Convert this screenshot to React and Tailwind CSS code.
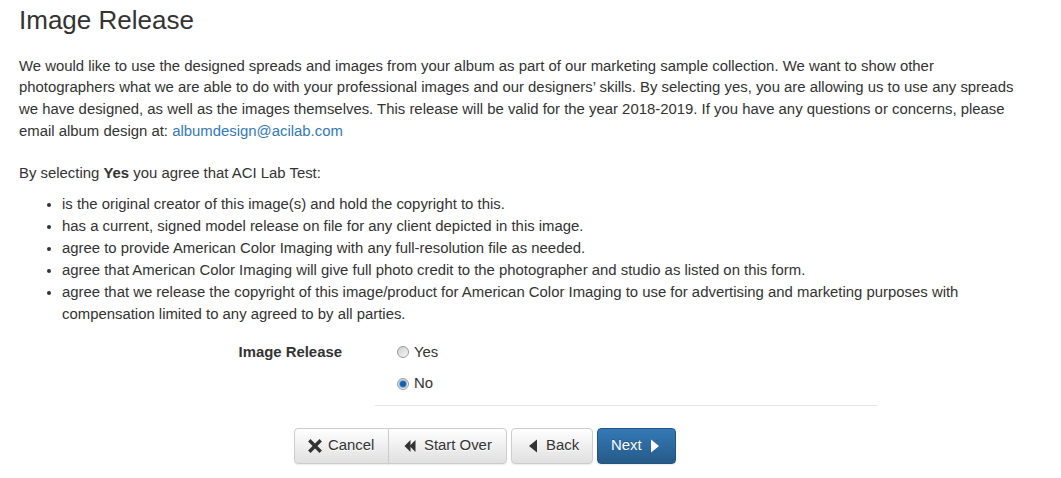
const font = { fontFamily: '"Liberation Sans", Arial, Helvetica, sans-serif' };

const XIcon = () => (
  <svg width="14" height="14" viewBox="0 0 14 14" className="shrink-0">
    <path d="M2.5 2.5 L11.5 11.5 M11.5 2.5 L2.5 11.5" stroke="#333" strokeWidth="3.4" strokeLinecap="square" />
  </svg>
);

const BackwardIcon = () => (
  <svg width="14" height="14" viewBox="0 0 14 14" className="shrink-0">
    <path d="M2.5 7 L8.5 1 L8.5 13 Z" fill="#333" />
    <path d="M7.5 7 L13.5 1 L13.5 13 Z" fill="#333" />
  </svg>
);

const TriLeft = () => (
  <svg width="14" height="14" viewBox="0 0 14 14" className="shrink-0">
    <path d="M4 7 L12 0.5 L12 13.5 Z" fill="#333" />
  </svg>
);

const TriRight = () => (
  <svg width="12" height="14" viewBox="0 0 12 14" className="shrink-0">
    <path d="M8 7 L0 0.5 L0 13.5 Z" fill="#fff" />
  </svg>
);

const Radio = ({ checked, label }) => (
  <label className="flex items-center h-[21.8px] pl-[22px] cursor-pointer">
    <span className="w-[12px] h-[12px] rounded-full border border-[#9c9c9c] bg-linear-to-br from-[#cfcfcf] to-[#f7f7f7] flex items-center justify-center shrink-0">
      {checked && (
        <span className="w-[6px] h-[6px] rounded-full bg-[#1a5fa8] shadow-[0_0_0_1px_#7fb0dc]" />
      )}
    </span>
    <span className="ml-[5px]">{label}</span>
  </label>
);

const btnDefault =
  'h-[36px] flex items-center border border-[#ccc] bg-linear-to-b from-white to-[#e0e0e0] shadow-[0_1px_1px_rgba(0,0,0,0.075)] [text-shadow:0_1px_0_#fff]';

export default function App() {
  return (
    <div className="bg-white text-[#333] text-[14.9px] leading-[21.8px] pl-[19px] pr-[28px] pt-[6px] min-h-screen" style={font}>
      <h2 className="text-[26px] leading-[28.6px] font-normal mb-[21px]">Image Release</h2>

      <p className="mb-[20px]">
        We would like to use the designed spreads and images from your album as part of our marketing sample collection. We want to show other photographers what we are able to do with your professional images and our designers’ skills. By selecting yes, you are allowing us to use any spreads we have designed, as well as the images themselves. This release will be valid for the year 2018-2019. If you have any questions or concerns, please email album design at:{' '}
        <a href="#" className="text-[#337ab7]">albumdesign@acilab.com</a>
      </p>

      <p className="mb-[8px]">
        By selecting <b>Yes</b> you agree that ACI Lab Test:
      </p>

      <ul className="list-disc pl-[43px] mb-[17px] leading-[22px]">
        <li>is the original creator of this image(s) and hold the copyright to this.</li>
        <li>has a current, signed model release on file for any client depicted in this image.</li>
        <li>agree to provide American Color Imaging with any full-resolution file as needed.</li>
        <li>agree that American Color Imaging will give full photo credit to the photographer and studio as listed on this form.</li>
        <li>agree that we release the copyright of this image/product for American Color Imaging to use for advertising and marketing purposes with compensation limited to any agreed to by all parties.</li>
      </ul>

      <div className="flex">
        <div className="w-[323px] text-right font-bold">Image Release</div>
        <div className="ml-[33px] w-[502px] border-b border-[#e5e5e5] pb-[10px] flex flex-col gap-[9.4px]">
          <Radio label="Yes" />
          <Radio label="No" checked />
        </div>
      </div>

      <div className="flex mt-[22px] ml-[275px]">
        <div className="flex">
          <button className={`${btnDefault} w-[95px] pl-[13px] gap-[6px] rounded-l-[4px]`}>
            <XIcon />
            <span>Cancel</span>
          </button>
          <button className={`${btnDefault} w-[119px] -ml-px pl-[13px] gap-[8px] rounded-r-[4px]`}>
            <BackwardIcon />
            <span>Start Over</span>
          </button>
        </div>
        <button className={`${btnDefault} w-[82px] ml-[4px] pl-[13px] gap-[7px] rounded-[4px]`}>
          <TriLeft />
          <span>Back</span>
        </button>
        <button className="ml-[4px] w-[79px] h-[36px] flex items-center pl-[13px] gap-[9px] border border-[#245580] rounded-[4px] bg-linear-to-b from-[#337ab7] to-[#265a88] text-white shadow-[0_1px_1px_rgba(0,0,0,0.075)] [text-shadow:0_-1px_0_rgba(0,0,0,0.2)]">
          <span>Next</span>
          <TriRight />
        </button>
      </div>
    </div>
  );
}
